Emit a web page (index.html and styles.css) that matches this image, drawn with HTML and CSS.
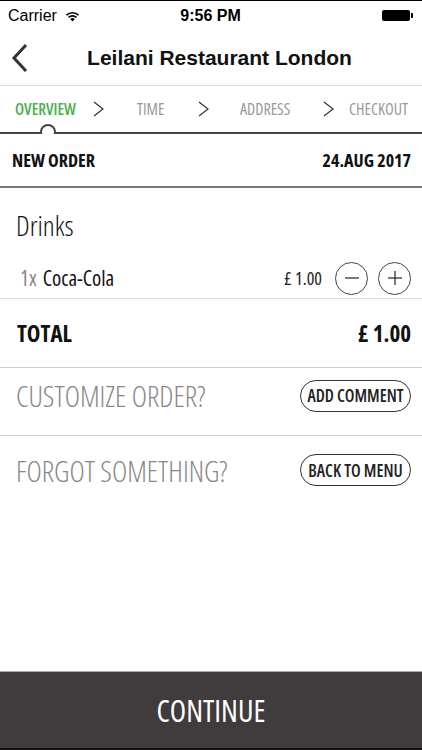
FILE: index.html
```html
<!DOCTYPE html>
<html>
<head>
    <meta charset="UTF-8">
    <title>Order Overview</title>
    <link rel="stylesheet" href="styles.css">
</head>
<body>
<div class="screen">
    <div class="statusBar">
        <span class="carrier">Carrier
            <svg class="wifi" width="15" height="12" viewBox="0 0 15 12">
                <path d="M7.5 11.5 L5.2 9.1 A3.3 3.3 0 0 1 9.8 9.1 Z" fill="#000"/>
                <path d="M3.6 7.4 A5.6 5.6 0 0 1 11.4 7.4" fill="none" stroke="#000" stroke-width="1.7"/>
                <path d="M1.5 5.2 A8.6 8.6 0 0 1 13.5 5.2" fill="none" stroke="#000" stroke-width="1.7"/>
            </svg>
        </span>
        <span class="clock">9:56 PM</span>
        <span class="battery"><i></i></span>
    </div>

    <div class="navBar">
        <svg class="back" width="18" height="30" viewBox="0 0 18 30">
            <polyline points="15,2 3,15 15,28" fill="none" stroke="#333" stroke-width="3"/>
        </svg>
        <h1>Leilani Restaurant London</h1>
    </div>

    <ul class="steps">
        <li class="cur">OVERVIEW</li>
        <li class="arrow"><svg width="11" height="16" viewBox="0 0 11 16"><polyline points="1,1 10,8 1,15" fill="none" stroke="#333" stroke-width="1.2"/></svg></li>
        <li>TIME</li>
        <li class="arrow"><svg width="11" height="16" viewBox="0 0 11 16"><polyline points="1,1 10,8 1,15" fill="none" stroke="#333" stroke-width="1.2"/></svg></li>
        <li>ADDRESS</li>
        <li class="arrow"><svg width="11" height="16" viewBox="0 0 11 16"><polyline points="1,1 10,8 1,15" fill="none" stroke="#333" stroke-width="1.2"/></svg></li>
        <li>CHECKOUT</li>
    </ul>

    <div class="orderHead">
        <span>NEW ORDER</span>
        <span>24.AUG 2017</span>
    </div>

    <div class="group">
        <h2>Drinks</h2>
        <div class="item">
            <span class="qty">1x</span>
            <span class="name">Coca-Cola</span>
            <span class="price">£ 1.00</span>
            <span class="round minus">
                <svg width="14" height="14" viewBox="0 0 14 14"><line x1="0" y1="7" x2="14" y2="7" stroke="#333" stroke-width="1.3"/></svg>
            </span>
            <span class="round">
                <svg width="14" height="14" viewBox="0 0 14 14"><line x1="0" y1="7" x2="14" y2="7" stroke="#333" stroke-width="1.3"/><line x1="7" y1="0" x2="7" y2="14" stroke="#333" stroke-width="1.3"/></svg>
            </span>
        </div>
    </div>

    <div class="total">
        <span>TOTAL</span>
        <span>£ 1.00</span>
    </div>

    <div class="action first">
        <span class="ask">CUSTOMIZE ORDER?</span>
        <span class="pill">ADD COMMENT</span>
    </div>

    <div class="action last">
        <span class="ask">FORGOT SOMETHING?</span>
        <span class="pill">BACK TO MENU</span>
    </div>

    <div class="continue">CONTINUE</div>
</div>
</body>
</html>
```
FILE: styles.css
```css
* {
    margin: 0;
    padding: 0;
    box-sizing: border-box;
}

body {
    font-family: "Open Sans", sans-serif;
    font-stretch: 75%;
    color: #222;
    background: #fff;
}

ul, li {
    list-style: none;
}

.screen {
    display: flex;
    flex-direction: column;
    height: 750px;
    border-top: 1px solid #000;
}

/* status bar */
.statusBar {
    display: flex;
    align-items: center;
    justify-content: space-between;
    height: 29px;
    padding: 0 9px 0 8px;
    font-family: "Liberation Sans", Arial, sans-serif;
    font-stretch: normal;
    font-size: 16px;
    color: #000;
}

.carrier {
    display: flex;
    align-items: center;
    gap: 8px;
    width: 90px;
}

.clock {
    font-weight: bold;
}

.battery {
    position: relative;
    display: flex;
    justify-content: flex-end;
    width: 90px;
}

.battery i {
    display: block;
    width: 28px;
    height: 11px;
    margin-right: 3px;
    border-radius: 2px;
    background: #000;
}

.battery:after {
    content: "";
    position: absolute;
    right: 0;
    top: 3px;
    width: 2px;
    height: 5px;
    border-radius: 0 1px 1px 0;
    background: #000;
}

/* navigation */
.navBar {
    display: flex;
    align-items: center;
    height: 56px;
    padding: 0 0 0 11px;
    border-bottom: 1px solid #ddd;
}

.navBar h1 {
    flex: 1;
    padding-right: 12px;
    text-align: center;
    font-family: "Liberation Sans", Arial, sans-serif;
    font-stretch: normal;
    font-size: 21px;
    font-weight: bold;
    color: #111;
}

/* steps */
.steps {
    position: relative;
    display: grid;
    grid-template-columns: 78px 44px 61px 42px 83px 26px auto;
    align-items: center;
    height: 48px;
    padding: 0 0 0 15px;
    border-bottom: 2px solid #444;
    font-size: 16px;
    color: #999;
}

.steps li.cur {
    color: #4caf50;
    font-weight: 600;
}

.steps li.arrow {
    display: flex;
}

.steps:after {
    content: "";
    position: absolute;
    left: 40px;
    bottom: -8px;
    width: 12px;
    height: 12px;
    border: 2px solid #444;
    border-radius: 50%;
    background: #fff;
    clip-path: inset(0 0 6px 0);
}

/* order */
.orderHead {
    display: flex;
    align-items: center;
    justify-content: space-between;
    height: 54px;
    padding: 0 11px 0 12px;
    border-bottom: 2px solid #777;
    font-size: 18px;
    font-weight: bold;
    color: #111;
}

.group {
    padding: 18px 11px 0 16px;
    border-bottom: 1px solid #ddd;
}

.group h2 {
    height: 38px;
    line-height: 38px;
    font-size: 28px;
    font-weight: 300;
    color: #111;
}

.item {
    display: flex;
    align-items: center;
    height: 40px;
    margin-top: 14px;
    padding-left: 4px;
    font-size: 21px;
}

.item .qty {
    color: #888;
    margin-right: 6px;
}

.item .name {
    flex: 1;
    font-weight: 500;
    color: #111;
}

.item .price {
    margin-right: 13px;
    font-size: 18px;
    color: #222;
}

.round {
    display: flex;
    align-items: center;
    justify-content: center;
    width: 33px;
    height: 33px;
    margin-left: 10px;
    border: 1.5px solid #444;
    border-radius: 50%;
}

.round.minus {
    margin-left: 0;
}

.total {
    display: flex;
    align-items: center;
    justify-content: space-between;
    height: 69px;
    padding: 0 11px 0 17px;
    border-bottom: 1px solid #ccc;
    font-size: 23px;
    font-weight: bold;
    color: #111;
}

.action {
    display: flex;
    align-items: center;
    justify-content: space-between;
    padding: 0 11px 0 16px;
}

.action.first {
    height: 68px;
    padding-bottom: 12px;
    border-bottom: 1px solid #ccc;
}

.action.last {
    height: 68px;
}

.action .ask {
    font-size: 29px;
    font-weight: 300;
    color: #888;
}

.pill {
    display: flex;
    align-items: center;
    justify-content: center;
    width: 111px;
    height: 32px;
    border: 1.5px solid #333;
    border-radius: 16px;
    font-size: 17px;
    font-weight: 600;
    color: #222;
}

.continue {
    display: flex;
    align-items: center;
    justify-content: center;
    height: 79px;
    margin-top: auto;
    border-top: 1px solid #aaa;
    border-bottom: 2px solid #111;
    background: #403b3c;
    font-size: 30px;
    color: #fff;
}
```
